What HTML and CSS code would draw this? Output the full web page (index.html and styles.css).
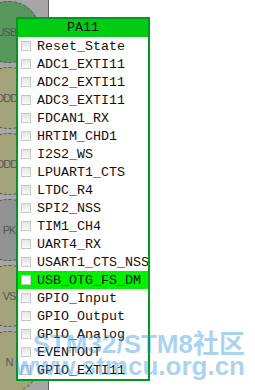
FILE: index.html
```html
<!DOCTYPE html>
<html lang="en">

<head>
    <meta charset="UTF-8">
    <meta name="viewport" content="width=device-width, initial-scale=1.0">
    <title>PA11 Pin Menu</title>
    <link rel="stylesheet" href="styles.css">
</head>

<body>
    <div class="page">
        <div class="board">
            <div class="pin pin-green">USB_</div>
            <div class="pin pin-olive">ODD3</div>
            <div class="pin pin-olive">ODD5</div>
            <div class="pin pin-gray">PK</div>
            <div class="pin pin-olive">VS</div>
            <div class="pin pin-olive">N</div>
        </div>
        <div class="canvas"></div>
    </div>

    <div class="menu">
        <div class="menu-title">PA11</div>
        <div class="menu-item"><span class="box"></span>Reset_State</div>
        <div class="menu-item"><span class="box"></span>ADC1_EXTI11</div>
        <div class="menu-item"><span class="box"></span>ADC2_EXTI11</div>
        <div class="menu-item"><span class="box"></span>ADC3_EXTI11</div>
        <div class="menu-item"><span class="box"></span>FDCAN1_RX</div>
        <div class="menu-item"><span class="box"></span>HRTIM_CHD1</div>
        <div class="menu-item"><span class="box"></span>I2S2_WS</div>
        <div class="menu-item"><span class="box"></span>LPUART1_CTS</div>
        <div class="menu-item"><span class="box"></span>LTDC_R4</div>
        <div class="menu-item"><span class="box"></span>SPI2_NSS</div>
        <div class="menu-item"><span class="box"></span>TIM1_CH4</div>
        <div class="menu-item"><span class="box"></span>UART4_RX</div>
        <div class="menu-item"><span class="box"></span>USART1_CTS_NSS</div>
        <div class="menu-item selected"><span class="box"></span>USB_OTG_FS_DM</div>
        <div class="menu-item"><span class="box"></span>GPIO_Input</div>
        <div class="menu-item"><span class="box"></span>GPIO_Output</div>
        <div class="menu-item"><span class="box"></span>GPIO_Analog</div>
        <div class="menu-item"><span class="box"></span>EVENTOUT</div>
        <div class="menu-item"><span class="box"></span>GPIO_EXTI11</div>
    </div>

    <div class="watermark">
        <div>STM32/STM8社区</div>
        <div>www.stmcu.org.cn</div>
    </div>
</body>

</html>
```

FILE: styles.css
```css
body {
    margin: 0;
    width: 255px;
    height: 390px;
    overflow: hidden;
    position: relative;
    font-family: 'Liberation Mono', monospace;
    background-color: #fff;
}

.page {
    display: flex;
    height: 390px;
}

.board {
    width: 48px;
    flex: none;
    background-color: #a6a6a6;
    border-right: 1px solid #5e5e5e;
    display: flex;
    flex-direction: column;
    gap: 4px;
    padding-top: 1px;
    overflow: hidden;
}

.pin {
    flex: none;
    width: 62px;
    height: 62px;
    margin-left: -22px;
    box-sizing: border-box;
    border: 1px dashed #555;
    border-radius: 50%;
    display: flex;
    align-items: center;
    justify-content: center;
    font-family: 'Liberation Sans', sans-serif;
    font-size: 11px;
    letter-spacing: -1px;
    color: #555;
}

.pin-green {
    background-color: #58985c;
}

.pin-olive {
    background-color: #a4a47c;
}

.pin-gray {
    background-color: #939393;
}

.canvas {
    flex: 1;
    background-color: #fff;
}

.menu {
    position: absolute;
    left: 16px;
    top: 17px;
    width: 134px;
    box-sizing: border-box;
    border: 2px solid #009a22;
    background-color: #fff;
    font-size: 13.33px;
    color: #111;
}

.menu-title {
    height: 18px;
    line-height: 18px;
    background-color: #00cc11;
    text-align: center;
}

.menu-item {
    height: 18px;
    display: flex;
    align-items: center;
    gap: 6px;
    padding-left: 3px;
    white-space: nowrap;
    overflow: hidden;
}

.menu-item.selected {
    background-color: #00f000;
}

.box {
    flex: none;
    width: 10px;
    height: 10px;
    box-sizing: border-box;
    border: 1px solid #c8c8c8;
    background: linear-gradient(#e4e4e4, #fafafa);
}

.selected .box {
    background: #fff;
}

.watermark {
    position: absolute;
    right: 10px;
    top: 333px;
    text-align: right;
    font-family: 'Liberation Sans', 'Noto Sans CJK SC', sans-serif;
    font-weight: bold;
    font-size: 26px;
    line-height: 22px;
    color: rgba(30, 140, 215, 0.4);
    pointer-events: none;
    white-space: nowrap;
}
```
